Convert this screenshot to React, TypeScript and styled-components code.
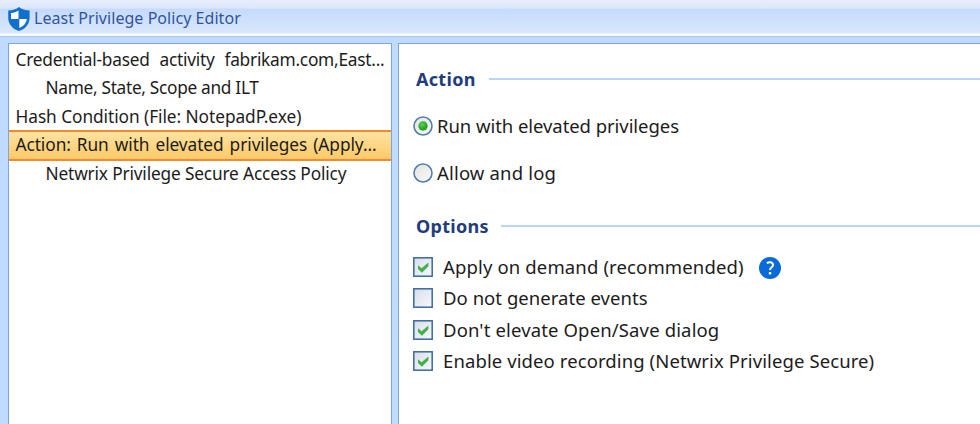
import React from 'react';
import styled, { createGlobalStyle } from 'styled-components';

const GlobalStyle = createGlobalStyle`
  *, *::before, *::after { box-sizing: border-box; }
  html, body { margin: 0; overflow: hidden; }
  body { font-family: "Noto Sans", "Open Sans", sans-serif; color: #1c1c1c; }
`;

const Window = styled.div`
  width: 100%;
  height: 100vh;
  display: flex;
  flex-direction: column;
  background: #bfdbff;
`;

const TitleBar = styled.header`
  flex: none;
  height: 37px;
  display: flex;
  align-items: flex-start;
  padding: 7px 0 0 8px;
  border-bottom: 1px solid #a9c8f5;
  background: linear-gradient(#e6eefb 0, #dce8fa 8px, #c5dbfd 9px, #d9e7fb 33px, #ffffff 34px, #f4f9ff 36px);
`;

const Text = styled.span<{ $ls?: number; $ws?: number }>`
  letter-spacing: ${p => p.$ls ?? 0}px;
  word-spacing: ${p => p.$ws ?? 0}px;
  white-space: pre;
`;

const Title = styled(Text)`
  margin: -1px 0 0 4px;
  font-size: 16px;
  line-height: 24px;
  color: #32549e;
`;

const Body = styled.main`
  flex: 1;
  display: flex;
  gap: 6px;
  padding: 6px 0 0 8px;
  min-height: 0;
`;

const Tree = styled.nav`
  flex: none;
  width: 384px;
  padding: 1.5px 0 0;
  border: 1px solid #7fa3db;
  border-bottom: 0;
  background: #fff;
`;

const TreeItem = styled.div<{ $nested?: boolean; $selected?: boolean }>`
  height: 28.5px;
  display: flex;
  align-items: center;
  padding-left: ${p => (p.$nested ? 36.5 : 6.5)}px;
  font-size: 17.3px;
  line-height: 24px;
  ${p =>
    p.$selected &&
    `
    height: 30.5px;
    margin: -1px 0;
    border: solid #f58a2c;
    border-width: 2px 0;
    background: linear-gradient(#ffe3a0, #ffc968);
  `}
`;

const Details = styled.section`
  flex: 1;
  padding: 21px 0 0 14px;
  border: 1px solid #7fa3db;
  border-width: 1px 0 0 1px;
  background: #fff;
`;

const Heading = styled.h2<{ $gap: number }>`
  display: flex;
  align-items: center;
  gap: ${p => p.$gap}px;
  margin: 0;
  padding-left: 3px;
  height: 28px;
  font-size: 18px;
  line-height: 28px;
  font-weight: 700;
  color: #1f3d7d;
  &::after {
    content: "";
    flex: 1;
    height: 2px;
    margin-top: -1px;
    background: #b6d5ff;
  }
`;

const Choices = styled.div<{ $top: number; $pitch: number }>`
  padding: ${p => p.$top}px 0 16px;
  display: grid;
  grid-auto-rows: ${p => p.$pitch}px;
`;

const Choice = styled.label<{ $gap: number }>`
  display: flex;
  align-items: center;
  gap: ${p => p.$gap}px;
  font-size: 18.5px;
  line-height: 28px;
`;

const Glyph = styled.svg`
  flex: none;
  display: block;
`;

const HelpGlyph = styled(Glyph)`
  margin: 3px 0 0 5px;
`;

function Shield() {
  return (
    <Glyph width="22" height="24" viewBox="0 0 22 24">
      <path d="M11 0C8.5 2.2 4.6 3.5 0.2 3.5V10.5C0.2 17 4.2 21.8 11 24C17.8 21.8 21.6 17 21.6 10.5V3.5C17.4 3.5 13.5 2.2 11 0Z" fill="#1070cc" />
      <path d="M10.5 3.6C8.3 5 5.8 5.9 3 6.1V12H10.5Z" fill="#fff" />
      <path d="M11.3 12H18.9C18.2 16.3 15.6 19.3 11.3 20.9Z" fill="#fff" />
    </Glyph>
  );
}

function Radio({ checked }: { checked?: boolean }) {
  return (
    <Glyph width="20" height="20" viewBox="0 0 20 20">
      <defs>
        <radialGradient id="radioDot" cx="0.4" cy="0.35">
          <stop offset="0" stopColor="#5bcf55" />
          <stop offset="1" stopColor="#22a722" />
        </radialGradient>
        <linearGradient id="radioFace" x1="0" y1="0" x2="1" y2="1">
          <stop offset="0" stopColor="#e2e2df" />
          <stop offset="1" stopColor="#fbfbfa" />
        </linearGradient>
      </defs>
      <circle cx="10" cy="10" r="9" fill="url(#radioFace)" stroke="#507fae" strokeWidth="1.6" />
      {checked && <circle cx="10" cy="10" r="4.7" fill="url(#radioDot)" />}
    </Glyph>
  );
}

function Checkbox({ checked }: { checked?: boolean }) {
  return (
    <Glyph width="20" height="20" viewBox="0 0 20 20">
      <defs>
        <linearGradient id="boxFace" x1="0" y1="0" x2="1" y2="1">
          <stop offset="0" stopColor="#d9dde9" />
          <stop offset="1" stopColor="#f8f9fd" />
        </linearGradient>
      </defs>
      <rect x="0.8" y="0.8" width="18.4" height="18.4" fill="url(#boxFace)" stroke="#38699d" strokeWidth="1.5" />
      {checked && <path d="M5 8.2L8.6 11.3L15.4 5.6V9.2L8.9 15.8L5 12Z" fill="#42b148" />}
    </Glyph>
  );
}

function Help() {
  return (
    <HelpGlyph width="22" height="22" viewBox="0 0 22 22">
      <circle cx="11" cy="11" r="11" fill="#0a6ad8" />
      <path d="M7.9 6.2C9.6 4.9 14 4.6 14 8C14 10.3 11 10.3 11 13.1" fill="none" stroke="#fff" strokeWidth="2" />
      <rect x="9.8" y="15" width="2.5" height="2.5" rx="0.8" fill="#fff" />
    </HelpGlyph>
  );
}

const treeItems = [
  { text: 'Credential-based  activity  fabrikam.com,East...', ls: -0.24, ws: 0.7 },
  { text: 'Name, State, Scope and ILT', ls: -0.31, nested: true },
  { text: 'Hash Condition (File: NotepadP.exe)', ls: -0.06 },
  { text: 'Action: Run with elevated privileges (Apply...', ls: -0.07, ws: 1.6, selected: true },
  { text: 'Netwrix Privilege Secure Access Policy', ls: -0.16, nested: true },
];

const actions = [
  { text: 'Run with elevated privileges', ls: -0.06, checked: true },
  { text: 'Allow and log', ls: 0.17 },
];

const options = [
  { text: 'Apply on demand (recommended)', ls: 0.14, checked: true, help: true },
  { text: 'Do not generate events', ls: 0.04 },
  { text: "Don't elevate Open/Save dialog", ls: 0.14, checked: true },
  { text: 'Enable video recording (Netwrix Privilege Secure)', ls: 0.1, checked: true },
];

export default function App() {
  return (
    <>
      <GlobalStyle />
      <Window>
        <TitleBar>
          <Shield />
          <Title $ls={0.05}>Least Privilege Policy Editor</Title>
        </TitleBar>
        <Body>
          <Tree>
            {treeItems.map(i => (
              <TreeItem key={i.text} $nested={i.nested} $selected={i.selected}>
                <Text $ls={i.ls} $ws={i.ws}>{i.text}</Text>
              </TreeItem>
            ))}
          </Tree>
          <Details>
            <Heading $gap={13}><Text $ls={0.3}>Action</Text></Heading>
            <Choices $top={10} $pitch={46.5}>
              {actions.map(a => (
                <Choice key={a.text} $gap={4}>
                  <Radio checked={a.checked} />
                  <Text $ls={a.ls}>{a.text}</Text>
                </Choice>
              ))}
            </Choices>
            <Heading $gap={12}><Text $ls={0.3}>Options</Text></Heading>
            <Choices $top={11} $pitch={31.5}>
              {options.map(o => (
                <Choice key={o.text} $gap={10}>
                  <Checkbox checked={o.checked} />
                  <Text $ls={o.ls}>{o.text}</Text>
                  {o.help && <Help />}
                </Choice>
              ))}
            </Choices>
          </Details>
        </Body>
      </Window>
    </>
  );
}
